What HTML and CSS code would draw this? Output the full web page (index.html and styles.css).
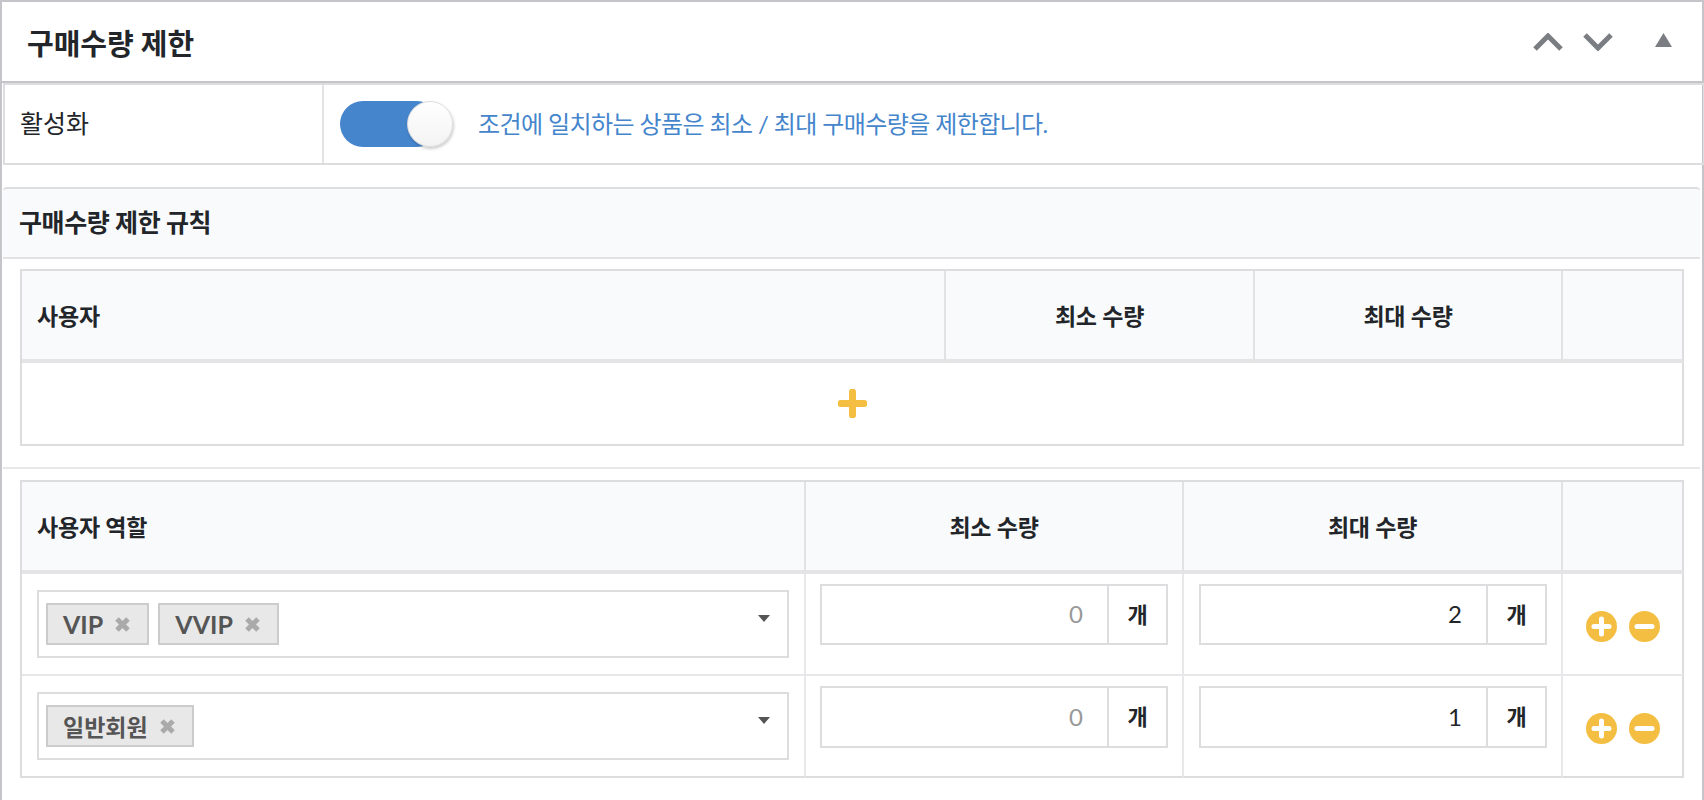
FILE: index.html
```html
<!DOCTYPE html>
<html lang="ko">
<head>
    <meta charset="UTF-8">
    <title>구매수량 제한</title>
    <link rel="stylesheet" href="styles.css">
</head>
<body>
    <div class="panel">
        <div class="panel-head">
            <h1>구매수량 제한</h1>
            <div class="panel-tools">
                <svg class="chevron" viewBox="0 0 30 18"><path d="M2 16 L15 3 L28 16"/></svg>
                <svg class="chevron" viewBox="0 0 30 18"><path d="M2 2 L15 15 L28 2"/></svg>
                <svg class="fold" viewBox="0 0 17 14"><path d="M8.5 0 L17 14 L0 14 Z"/></svg>
            </div>
        </div>

        <div class="setting-row">
            <div class="setting-label">활성화</div>
            <div class="setting-value">
                <div class="toggle"><span class="toggle-knob"></span></div>
                <span class="help-text">조건에 일치하는 상품은 최소 / 최대 구매수량을 제한합니다.</span>
            </div>
        </div>

        <div class="rules">
            <div class="rules-head">구매수량 제한 규칙</div>

            <div class="rule-block">
                <table class="rule-table users">
                    <colgroup><col class="c1"><col class="c2"><col class="c3"><col class="c4"></colgroup>
                    <thead>
                        <tr><th>사용자</th><th class="center">최소 수량</th><th class="center">최대 수량</th><th></th></tr>
                    </thead>
                    <tbody>
                        <tr>
                            <td colspan="4" class="add-cell">
                                <svg class="add-plus" viewBox="0 0 29 29"><path d="M14.5 3 V26 M3 14.5 H26"/></svg>
                            </td>
                        </tr>
                    </tbody>
                </table>
            </div>

            <div class="rule-block last">
                <table class="rule-table roles">
                    <colgroup><col class="c1"><col class="c2"><col class="c3"><col class="c4"></colgroup>
                    <thead>
                        <tr><th>사용자 역할</th><th class="center">최소 수량</th><th class="center">최대 수량</th><th></th></tr>
                    </thead>
                    <tbody>
                        <tr>
                            <td class="select-cell">
                                <div class="multi-select">
                                    <span class="chip chip-latin">VIP<svg class="chip-x" viewBox="0 0 15 15"><path d="M2 2 L13 13 M13 2 L2 13"/></svg></span>
                                    <span class="chip chip-latin">VVIP<svg class="chip-x" viewBox="0 0 15 15"><path d="M2 2 L13 13 M13 2 L2 13"/></svg></span>
                                    <span class="caret"></span>
                                </div>
                            </td>
                            <td class="qty">
                                <div class="qty-group"><input type="text" placeholder="0"><span class="unit">개</span></div>
                            </td>
                            <td class="qty">
                                <div class="qty-group"><input type="text" value="2"><span class="unit">개</span></div>
                            </td>
                            <td class="actions">
                                <div class="action-btns">
                                    <svg class="round-btn" viewBox="0 0 31 31"><circle cx="15.5" cy="15.5" r="15.5"/><path d="M15.5 8 V23 M8 15.5 H23"/></svg>
                                    <svg class="round-btn" viewBox="0 0 31 31"><circle cx="15.5" cy="15.5" r="15.5"/><path d="M8 15.5 H23"/></svg>
                                </div>
                            </td>
                        </tr>
                        <tr>
                            <td class="select-cell">
                                <div class="multi-select">
                                    <span class="chip">일반회원<svg class="chip-x" viewBox="0 0 15 15"><path d="M2 2 L13 13 M13 2 L2 13"/></svg></span>
                                    <span class="caret"></span>
                                </div>
                            </td>
                            <td class="qty">
                                <div class="qty-group"><input type="text" placeholder="0"><span class="unit">개</span></div>
                            </td>
                            <td class="qty">
                                <div class="qty-group"><input type="text" value="1"><span class="unit">개</span></div>
                            </td>
                            <td class="actions">
                                <div class="action-btns">
                                    <svg class="round-btn" viewBox="0 0 31 31"><circle cx="15.5" cy="15.5" r="15.5"/><path d="M15.5 8 V23 M8 15.5 H23"/></svg>
                                    <svg class="round-btn" viewBox="0 0 31 31"><circle cx="15.5" cy="15.5" r="15.5"/><path d="M8 15.5 H23"/></svg>
                                </div>
                            </td>
                        </tr>
                    </tbody>
                </table>
            </div>
        </div>
    </div>
</body>
</html>
```

FILE: styles.css
```css
html, body {
    height: 100%;
}
body {
    margin: 0;
    background-color: #FFFFFF;
    color: #222529;
    font-family: Lato, 'Noto Sans CJK KR', sans-serif;
    overflow: hidden;
}
.panel {
    box-sizing: border-box;
    height: 820px;
    border: 2px solid #C4C4C9;
}
.panel-head {
    display: flex;
    justify-content: space-between;
    align-items: center;
    height: 79px;
    padding: 0 30px 0 25px;
    border-bottom: 2px solid #C4C4C9;
}
.panel-head h1 {
    margin: 0;
    font-size: 29px;
    font-weight: 700;
}
.panel-tools {
    display: flex;
    align-items: flex-start;
}
.chevron {
    width: 30px;
    height: 18px;
    margin-right: 20px;
    fill: none;
    stroke: #7A7D82;
    stroke-width: 5;
}
.chevron + .fold {
    margin-left: 22px;
}
.fold {
    width: 17px;
    height: 14px;
    fill: #7A7D82;
}

.setting-row {
    display: flex;
    height: 78px;
    margin: 0 0 22px 1px;
    width: 1698px;
    border: 2px solid #DDDDDF;
}
.setting-label {
    display: flex;
    align-items: center;
    box-sizing: border-box;
    width: 319px;
    padding: 0 0 4px 15px;
    border-right: 2px solid #E4E4E6;
    font-size: 25px;
}
.setting-value {
    display: flex;
    align-items: center;
    padding-left: 16px;
}
.toggle {
    position: relative;
    width: 100px;
    height: 46px;
    margin-right: 38px;
    border-radius: 23px;
    background-color: #4485CC;
}
.toggle-knob {
    position: absolute;
    top: 0;
    right: -13px;
    box-sizing: border-box;
    width: 46px;
    height: 46px;
    border: 1px solid #DDDDDD;
    border-radius: 50%;
    background: linear-gradient(#FFFFFF, #F3F3F3);
    box-shadow: 1px 2px 3px rgba(0, 0, 0, 0.2);
}
.help-text {
    margin-bottom: 4px;
    color: #4485CC;
    font-size: 24px;
    letter-spacing: -0.6px;
}

.rules {
    margin-left: 1px;
    width: 1697px;
}
.rules-head {
    box-sizing: border-box;
    height: 72px;
    padding: 0 16px;
    line-height: 66px;
    border-top: 2px solid #DDDDDF;
    border-bottom: 2px solid #E2E2E4;
    border-top-left-radius: 4px;
    border-top-right-radius: 4px;
    background-color: #F9FAFB;
    font-size: 25px;
    font-weight: 700;
    letter-spacing: -0.4px;
}
.rule-block {
    padding: 10px 16px 21px 17px;
    border-bottom: 2px solid #E8E8EA;
}
.rule-block.last {
    padding-top: 11px;
    padding-bottom: 0;
    border-bottom: none;
}
.rule-table {
    table-layout: fixed;
    width: 1664px;
    border-spacing: 0;
    border-top: 2px solid #DDDDDF;
    border-left: 2px solid #DDDDDF;
}
.rule-table th {
    padding: 0 0 0 15px;
    background-color: #F9FAFB;
    border-right: 2px solid #E2E2E4;
    border-bottom: 4px solid #E4E4E6;
    text-align: left;
    font-size: 23px;
    font-weight: 700;
    letter-spacing: -0.2px;
}
.rule-table th.center {
    padding: 0;
    text-align: center;
}
.rule-table th:last-child {
    padding: 0;
    border-right-color: #DDDDDF;
}
.rule-table td {
    box-sizing: border-box;
    padding: 0;
    border-right: 2px solid #E8E8EA;
    border-bottom: 2px solid #E8E8EA;
    vertical-align: top;
}
.rule-table td:last-child {
    border-right-color: #DDDDDF;
}
.rule-table tr:last-child td {
    border-bottom-color: #DDDDDF;
}
.users .c1 { width: 924px; }
.users .c2 { width: 309px; }
.users .c3 { width: 308px; }
.users .c4 { width: 121px; }
.users thead tr { height: 92px; }
.roles .c1 { width: 784px; }
.roles .c2 { width: 378px; }
.roles .c3 { width: 379px; }
.roles .c4 { width: 121px; }
.roles thead tr { height: 92px; }
.roles tbody tr { height: 102px; }

.add-cell {
    height: 83px;
    text-align: center;
}
.rule-table td.add-cell {
    vertical-align: middle;
}
.add-plus {
    display: block;
    width: 29px;
    height: 29px;
    margin: 0 auto;
    stroke: #F3BE42;
    stroke-width: 7;
    stroke-linecap: round;
}

.select-cell {
    padding: 16px 15px 0 15px !important;
}
.multi-select {
    display: flex;
    align-items: flex-start;
    gap: 9px;
    box-sizing: border-box;
    height: 68px;
    padding: 11px 17px 0 7px;
    border: 2px solid #DDDDDF;
}
.chip {
    display: flex;
    align-items: center;
    box-sizing: border-box;
    height: 42px;
    padding: 0 17px 0 15px;
    border: 2px solid #CCCCCC;
    background-color: #E8E8E8;
    color: #555555;
    font-size: 23px;
    font-weight: 700;
}
.chip-latin {
    font-size: 25px;
}
.chip-x {
    width: 15px;
    height: 15px;
    margin-left: 12px;
    stroke: #AAAAAA;
    stroke-width: 5;
}
.caret {
    width: 0;
    height: 0;
    margin: 12px 0 0 auto;
    border-top: 7px solid #555555;
    border-left: 6px solid transparent;
    border-right: 6px solid transparent;
}

.qty {
    padding: 10px 14px 0 14px !important;
}
.qty + .qty {
    padding-left: 15px !important;
}
.qty-group {
    display: flex;
    height: 61px;
}
tr:last-child .qty-group {
    height: 62px;
}
.qty-group input {
    flex: 1;
    min-width: 0;
    box-sizing: border-box;
    height: 100%;
    padding: 0 24px 2px 10px;
    border: 2px solid #DDDDDF;
    border-right: none;
    outline: none;
    background-color: #FFFFFF;
    color: #222529;
    text-align: right;
    font-family: inherit;
    font-size: 24px;
}
.qty-group input::placeholder {
    color: #999999;
    opacity: 1;
}
.unit {
    display: flex;
    align-items: center;
    justify-content: center;
    box-sizing: border-box;
    width: 61px;
    padding-bottom: 4px;
    border: 2px solid #DDDDDF;
    font-size: 22px;
    font-weight: 700;
}

.action-btns {
    display: flex;
    justify-content: center;
    gap: 12px;
    padding-top: 37px;
}
.round-btn {
    width: 31px;
    height: 31px;
    fill: #F3BE42;
    stroke: #FFFFFF;
    stroke-width: 5;
    stroke-linecap: round;
}
.round-btn circle {
    stroke: none;
}
```
